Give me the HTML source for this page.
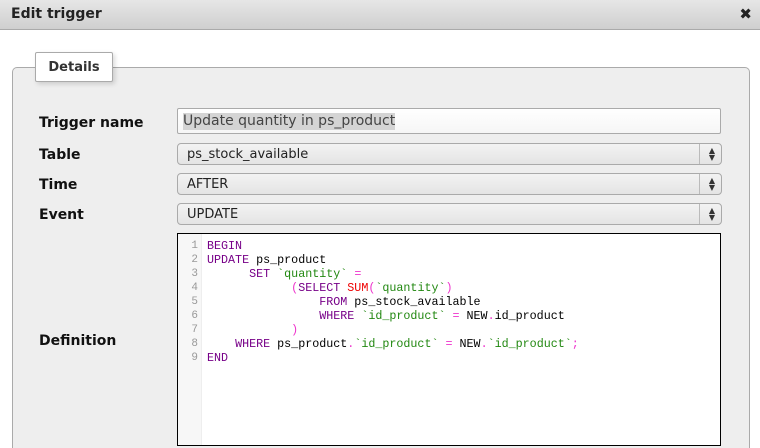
<!DOCTYPE html>
<html><head><style>
html,body{margin:0;width:760px;height:448px;overflow:hidden}
body{background:#fff;font-family:"DejaVu Sans","Liberation Sans",sans-serif;position:relative}
.tb{position:absolute;left:0;top:0;width:760px;height:29px;background:linear-gradient(#e6e6e6,#cfcfcf);border-bottom:1px solid #aaa}
.tb span{position:absolute;left:11px;top:6px;font-weight:bold;font-size:14px;color:#222}
.x{position:absolute;right:8px;top:5px;font-size:15px;font-weight:bold;color:#222}
.fs{position:absolute;left:12px;top:67px;width:736px;height:381px;background:#eee;border:1px solid #aaa;border-bottom:none;border-radius:5px 5px 0 0}
.lg{position:absolute;left:35px;top:52px;width:76px;height:28px;background:#fff;border:1px solid #aaa;border-radius:2px;box-shadow:2px 2px 5px rgba(0,0,0,.15);font-weight:bold;font-size:13px;color:#333;text-align:center;line-height:30px}
.lb{position:absolute;left:39px;font-weight:bold;font-size:14px;color:#111}
.in{position:absolute;left:177px;width:542px;height:24px;background:linear-gradient(#fff,#f6f6f6);border:1px solid #aaa;border-radius:2px;font-size:14px;color:#444}
.in span{background:#d4d4d4;position:absolute;left:5px;top:4px;line-height:17px}
.sel{position:absolute;left:177px;width:543px;height:20px;background:linear-gradient(#f3f3f3,#e4e4e4);border:1px solid #aaa;border-radius:4px;font-size:13px;color:#222;line-height:22px;text-indent:9px}
.sel:after{content:"";position:absolute;right:21px;top:0;height:20px;border-left:1px solid #bbb}
.sel i{position:absolute;right:6px;top:3px;font-style:normal;font-size:8px;line-height:7px;text-indent:0;color:#333}
.code{position:absolute;left:177px;top:233px;width:542px;height:211px;background:#fff;border:1px solid #000}
.gut{position:absolute;left:0;top:0;width:23px;height:211px;background:#f7f7f7;border-right:1px solid #eee}
pre{margin:0;position:absolute;top:5px;font-family:"Liberation Mono",monospace;font-size:11.7px;line-height:14px}
.n{left:0;width:20px;text-align:right;color:#999;font-size:11px}
.c{left:29px;color:#000}
.k{color:#708}.s{color:#281}.o{color:#e3c}.f{color:#e00}
</style></head><body>
<div class="tb"><span>Edit trigger</span><div class="x">✖</div></div>
<div class="fs"></div>
<div class="lg">Details</div>
<div class="lb" style="top:115px">Trigger name</div>
<div class="lb" style="top:147px">Table</div>
<div class="lb" style="top:177px">Time</div>
<div class="lb" style="top:207px">Event</div>
<div class="lb" style="top:333px">Definition</div>
<div class="in" style="top:108px"><span>Update quantity in ps_product</span></div>
<div class="sel" style="top:143px">ps_stock_available<i>▲<br>▼</i></div>
<div class="sel" style="top:173px">AFTER<i>▲<br>▼</i></div>
<div class="sel" style="top:203px">UPDATE<i>▲<br>▼</i></div>
<div class="code"><div class="gut"></div>
<pre class="n">1
2
3
4
5
6
7
8
9</pre>
<pre class="c"><span class="k">BEGIN</span>
<span class="k">UPDATE</span> ps_product
      <span class="k">SET</span> <span class="s">`quantity`</span> <span class="o">=</span>
            <span class="o">(</span><span class="k">SELECT</span> <span class="f">SUM</span><span class="o">(</span><span class="s">`quantity`</span><span class="o">)</span>
                <span class="k">FROM</span> ps_stock_available
                <span class="k">WHERE</span> <span class="s">`id_product`</span> <span class="o">=</span> NEW<span class="o">.</span>id_product
            <span class="o">)</span>
    <span class="k">WHERE</span> ps_product<span class="o">.</span><span class="s">`id_product`</span> <span class="o">=</span> NEW<span class="o">.</span><span class="s">`id_product`</span><span class="o">;</span>
<span class="k">END</span></pre></div>
</body></html>
